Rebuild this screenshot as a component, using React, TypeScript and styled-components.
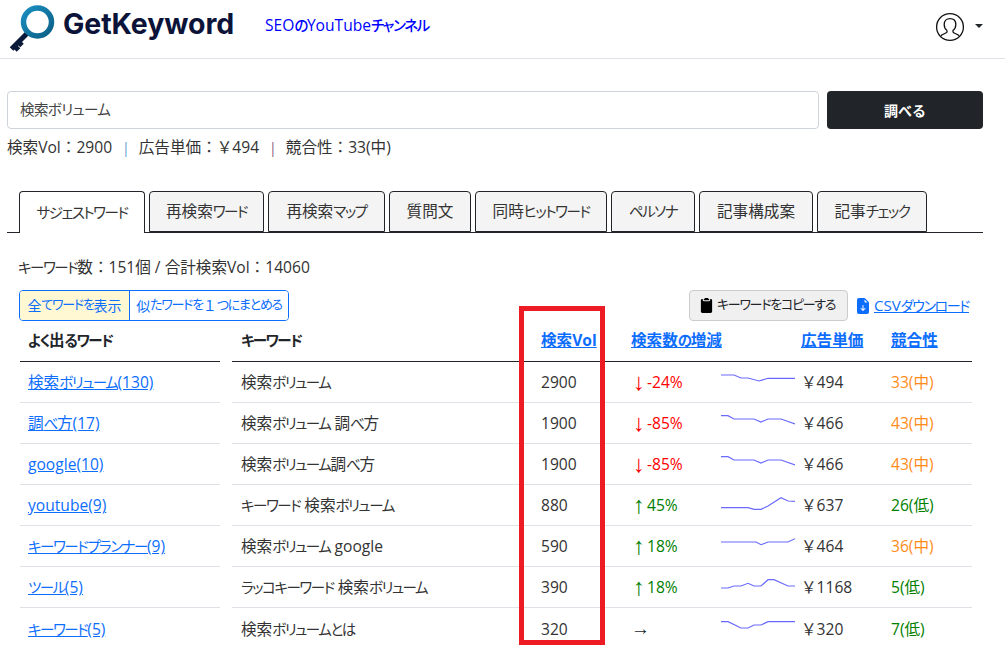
import React from "react";
import styled, { createGlobalStyle } from "styled-components";
import { BsClipboard2Fill, BsFileEarmarkArrowDownFill } from "react-icons/bs";

const Global = createGlobalStyle`
  html, body { margin: 0; padding: 0; background: #fff; }
  body {
    width: 1005px; height: 664px; overflow: hidden;
    font-family: "Open Sans", "Noto Sans CJK JP", sans-serif;
    font-size: 15.6px; color: #212529; line-height: 1.5;
  }
  a { color: #0d6efd; }
`;

const Page = styled.div`position: relative; width: 1005px; height: 664px; overflow: hidden;`;
const KanaRun = styled.span`
  font-size: 0.93em; letter-spacing: -0.1em; font-feature-settings: "palt";
`;
const Jp = ({ children }: { children: string }) => (
  <>
    {children.split(/([\u3040-\u30ff]+)/).map((part, i) =>
      i % 2 ? <KanaRun key={i}>{part}</KanaRun> : part
    )}
  </>
);

const Header = styled.header`
  display: flex; align-items: center; height: 58px; box-sizing: content-box;
  border-bottom: 1px solid #dee2e6; padding: 0 22px 0 8px;
`;
const Brand = styled.div`display: flex; align-items: center; width: 257px; height: 52px;`;
const BrandName = styled.span`
  font-family: Inter, sans-serif; font-weight: 700; font-size: 28.5px; color: #0c1338;
  letter-spacing: -0.1px; margin: -10px 0 0 5px;
`;
const ChannelLink = styled.a`
  color: #0000ff; text-decoration: none; font-size: 15.6px; font-weight: 500; margin-top: -6px;
`;
const UserMenu = styled.div`margin-left: auto; display: flex; align-items: center; gap: 10px; margin-top: -4px;`;
const Caret = styled.span`
  width: 0; height: 0; border-left: 4px solid transparent; border-right: 4px solid transparent;
  border-top: 4px solid #212529; margin-top: -3px;
`;

const Main = styled.main`padding: 32px 22px 0 7px;`;
const SearchRow = styled.div`display: flex; gap: 8px; height: 38px;`;
const SearchInput = styled.input`
  flex: 1; box-sizing: border-box; min-width: 0; border: 1px solid #ced4da; border-radius: 4px;
  padding: 0 12px; font: inherit; font-size: 14.5px; letter-spacing: -0.6px; font-feature-settings: "palt"; color: #444;
`;
const SearchButton = styled.button`
  width: 156px; border: 0; border-radius: 4px; background: #212529; color: #fff;
  font: inherit; font-size: 14px; font-weight: 700;
`;
const Stats = styled.div`margin-top: 7px; height: 22px; color: #333; white-space: nowrap;`;
const Sep = styled.span<{ $c: string }>`color: ${(p) => p.$c}; margin: 0 9px 0 10px; font-size: 14px;`;

const Tabs = styled.nav`
  display: flex; gap: 4px; margin-top: 33px; padding-left: 12px; height: 41px;
  box-sizing: content-box; border-bottom: 1px solid #212529;
`;
const Tab = styled.div<{ $active?: boolean; $w: number }>`
  width: ${(p) => p.$w}px; box-sizing: border-box; height: ${(p) => (p.$active ? 42 : 41)}px;
  display: flex; align-items: center; justify-content: center;
  border: 1px solid #212529; border-bottom: ${(p) => (p.$active ? "0" : "1px solid #212529")};
  border-radius: 4px 4px 0 0; background: ${(p) => (p.$active ? "#fff" : "#f4f4f4")};
  color: #333; white-space: nowrap;
`;

const Count = styled.div`margin: 23px 0 0 11px; height: 22px; color: #333; white-space: nowrap;`;
const ActionRow = styled.div`display: flex; align-items: center; margin: 11px 0 0 12px; height: 32px;`;
const Toggle = styled.div`
  display: flex; border: 1px solid #0d6efd; border-radius: 4px; height: 31px; width: 270px; box-sizing: border-box;
  color: #0d6efd; font-size: 14px; overflow: hidden; white-space: nowrap;
`;
const ToggleItem = styled.div<{ $on?: boolean; $w?: number }>`
  display: flex; align-items: center; justify-content: center;
  ${(p) => (p.$w ? `width: ${p.$w}px; flex: none;` : "flex: 1;")}
  background: ${(p) => (p.$on ? "#fff8d2" : "#fff")};
  & + & { border-left: 1px solid #0d6efd; }
`;
const CopyButton = styled.button`
  margin-left: auto; display: flex; align-items: center; gap: 3px; width: 159px; height: 31px; padding: 0 9px;
  box-sizing: border-box; border: 1px solid #ccc; border-radius: 4px; background: #f0f0f0; color: #212529;
  font: inherit; font-size: 14px; white-space: nowrap;
  svg { flex: none; }
`;
const CsvLink = styled.a`
  display: block; width: 114px; margin: 0 12px 0 9px; font-size: 15.1px; white-space: nowrap;
  svg { margin: 0 3px 0 -2px; vertical-align: -3px; }
`;

const Tables = styled.div`display: flex; gap: 12px; margin: 0 0 0 13px;`;
const Table = styled.table<{ $w: number }>`
  width: ${(p) => p.$w}px; flex: none; table-layout: fixed; border-collapse: separate; border-spacing: 0;
`;
const SideTable = styled(Table)`
  td { padding-left: 8px; }
  th { padding-left: 8px; }
`;
const Th = styled.th<{ $w?: number }>`
  ${(p) => (p.$w ? `width: ${p.$w}px;` : "")}
  height: 41px; box-sizing: border-box; padding: 0 9px; text-align: left; font-weight: 700; color: #212529;
  border-bottom: 1px solid #212529; white-space: nowrap;
`;
const Tr = styled.tr`&:not(:last-child) td { border-bottom: 1px solid #dee2e6; }`;
const Td = styled.td`
  height: 41px; box-sizing: border-box; padding: 2px 9px 0; white-space: nowrap; color: #333;
`;
const SparkTd = styled(Td)`padding: 0;`;
const Spark = styled.svg`display: block; width: 74px; height: 40px;`;
const Delta = styled.span<{ $c: string }>`color: ${(p) => p.$c};`;
const Arrow = styled.span`
  display: inline-block; width: 16px; text-align: center; font-family: "Liberation Sans", sans-serif;
  font-size: 24px; font-weight: 400; line-height: 16px; vertical-align: -2px;
`;
const FlatArrow = styled.span`color: #212529; font-family: "Liberation Sans", sans-serif; font-size: 19px; line-height: 16px;`;
const Level = styled.span<{ $c: string }>`color: ${(p) => p.$c};`;

const Highlight = styled.div`
  position: absolute; left: 519px; top: 306px; width: 86px; height: 339px; box-sizing: border-box;
  border: 5px solid #ed1c24; pointer-events: none;
`;

const Logo = () => (
  <svg width="50" height="52" viewBox="0 0 50 52" style={{ flex: "none" }}>
    <defs>
      <linearGradient id="ring" x1="0" y1="0" x2="1" y2="1">
        <stop offset="0" stopColor="#1a8fc0" />
        <stop offset="1" stopColor="#0c5f86" />
      </linearGradient>
    </defs>
    <path d="M20 29.5 L14 35.5 L3.5 46 M5.5 42 L10.5 47 M9.5 38 L14 42.5" stroke="#0c1a3a" strokeWidth="5" fill="none" />
    <circle cx="29.5" cy="19" r="14" stroke="url(#ring)" strokeWidth="5.5" fill="none" />
  </svg>
);

const UserIcon = () => (
  <svg width="30" height="30" viewBox="0 0 30 30" fill="none" stroke="#111" strokeWidth="1.3">
    <circle cx="15" cy="15" r="13.4" />
    <path d="M12 18.5c-2-1.5-2.8-3.6-2.8-6 0-3.6 2.3-5.8 5.8-5.8s5.8 2.2 5.8 5.8c0 2.4-.8 4.5-2.8 6v1.5c0 1 3 1.5 6 3.6M12 18.5v1.5c0 1-3 1.5-6 3.6" />
  </svg>
);

const tabs: [string, number][] = [
  ["再検索ワード", 115], ["再検索マップ", 117], ["質問文", 82], ["同時ヒットワード", 132],
  ["ペルソナ", 84], ["記事構成案", 114], ["記事チェック", 110],
];
const sideWords = ["検索ボリューム(130)", "調べ方(17)", "google(10)", "youtube(9)", "キーワードプランナー(9)", "ツール(5)", "キーワード(5)"];

type Row = { k: string; vol: number; dir: "up" | "down" | "flat"; d: string; spark: [number, number][]; price: number; lv: string; good: boolean };
const rows: Row[] = [
  { k: "検索ボリューム", vol: 2900, dir: "down", d: "-24%", price: 494, lv: "33(中)", good: false,
    spark: [[0,13],[13,13],[20,16],[27,16],[38,19],[47,16.3],[74,16.3]] },
  { k: "検索ボリューム 調べ方", vol: 1900, dir: "down", d: "-85%", price: 466, lv: "43(中)", good: false,
    spark: [[0,12.7],[7,12.7],[13,16],[33,16],[40,19],[47,16],[60,16],[74,21]] },
  { k: "検索ボリューム調べ方", vol: 1900, dir: "down", d: "-85%", price: 466, lv: "43(中)", good: false,
    spark: [[0,12.7],[7,12.7],[13,16],[33,16],[40,19],[47,16],[60,16],[74,21]] },
  { k: "キーワード 検索ボリューム", vol: 880, dir: "up", d: "45%", price: 637, lv: "26(低)", good: true,
    spark: [[0,22.7],[27,22.7],[33,24.3],[40,24.3],[47,21],[60,12.7],[67,16],[74,16.3]] },
  { k: "検索ボリューム google", vol: 590, dir: "up", d: "18%", price: 464, lv: "36(中)", good: false,
    spark: [[0,16],[35,16],[40,18.7],[47,16],[67,16],[74,12.7]] },
  { k: "ラッコキーワード 検索ボリューム", vol: 390, dir: "up", d: "18%", price: 1168, lv: "5(低)", good: true,
    spark: [[0,21],[7,21],[13,19],[20,19],[27,16.3],[33,19],[40,19],[47,12.7],[53,12.7],[67,19],[74,19]] },
  { k: "検索ボリュームとは", vol: 320, dir: "flat", d: "", price: 320, lv: "7(低)", good: true,
    spark: [[0,12.7],[7,12.7],[20,19],[27,19],[33,16],[40,16],[47,12.7],[74,12.7]] },
];

export default function App() {
  return (
    <Page>
      <Global />
      <Header>
        <Brand>
          <Logo />
          <BrandName>GetKeyword</BrandName>
        </Brand>
        <ChannelLink href="#"><Jp>SEOのYouTubeチャンネル</Jp></ChannelLink>
        <UserMenu>
          <UserIcon />
          <Caret />
        </UserMenu>
      </Header>
      <Main>
        <SearchRow>
          <SearchInput defaultValue="検索ボリューム" />
          <SearchButton>調べる</SearchButton>
        </SearchRow>
        <Stats>
          検索Vol：2900<Sep $c="#5b9bd5">|</Sep>広告単価：￥494<Sep $c="#8a5a7a">|</Sep>競合性：33(中)
        </Stats>
        <Tabs>
          <Tab $active $w={126}><Jp>サジェストワード</Jp></Tab>
          {tabs.map(([t, w]) => (
            <Tab key={t} $w={w}><Jp>{t}</Jp></Tab>
          ))}
        </Tabs>
        <Count><Jp>キーワード数：151個 / 合計検索Vol：14060</Jp></Count>
        <ActionRow>
          <Toggle>
            <ToggleItem $on $w={109}><Jp>全てワードを表示</Jp></ToggleItem>
            <ToggleItem><Jp>似たワードを１つにまとめる</Jp></ToggleItem>
          </Toggle>
          <CopyButton><BsClipboard2Fill size={15} color="#000" /><Jp>キーワードをコピーする</Jp></CopyButton>
          <CsvLink href="#"><BsFileEarmarkArrowDownFill size={16} /><Jp>CSVダウンロード</Jp></CsvLink>
        </ActionRow>
        <Tables>
          <SideTable $w={200}>
            <thead>
              <tr><Th><Jp>よく出るワード</Jp></Th></tr>
            </thead>
            <tbody>
              {sideWords.map((w) => (
                <Tr key={w}><Td><a href="#"><Jp>{w}</Jp></a></Td></Tr>
              ))}
            </tbody>
          </SideTable>
          <Table $w={740}>
            <thead>
              <tr>
                <Th $w={300}><Jp>キーワード</Jp></Th>
                <Th $w={90}><a href="#">検索Vol</a></Th>
                <Th $w={99}><a href="#"><Jp>検索数の増減</Jp></a></Th>
                <Th $w={71}></Th>
                <Th $w={90}><a href="#">広告単価</a></Th>
                <Th><a href="#">競合性</a></Th>
              </tr>
            </thead>
            <tbody>
              {rows.map((r) => (
                <Tr key={r.k}>
                  <Td><Jp>{r.k}</Jp></Td>
                  <Td>{r.vol}</Td>
                  <Td>
                    {r.dir === "flat" ? (
                      <FlatArrow>→</FlatArrow>
                    ) : (
                      <Delta $c={r.dir === "up" ? "#008000" : "#ff0000"}>
                        <Arrow>{r.dir === "up" ? "↑" : "↓"}</Arrow>{r.d}
                      </Delta>
                    )}
                  </Td>
                  <SparkTd>
                    <Spark viewBox="0 0 74 40">
                      <polyline fill="none" stroke="#6a6aff" strokeWidth="1.2" points={r.spark.map((p) => p.join(",")).join(" ")} />
                    </Spark>
                  </SparkTd>
                  <Td>￥{r.price}</Td>
                  <Td><Level $c={r.good ? "#008000" : "#ff8c1a"}>{r.lv}</Level></Td>
                </Tr>
              ))}
            </tbody>
          </Table>
        </Tables>
      </Main>
      <Highlight />
    </Page>
  );
}
